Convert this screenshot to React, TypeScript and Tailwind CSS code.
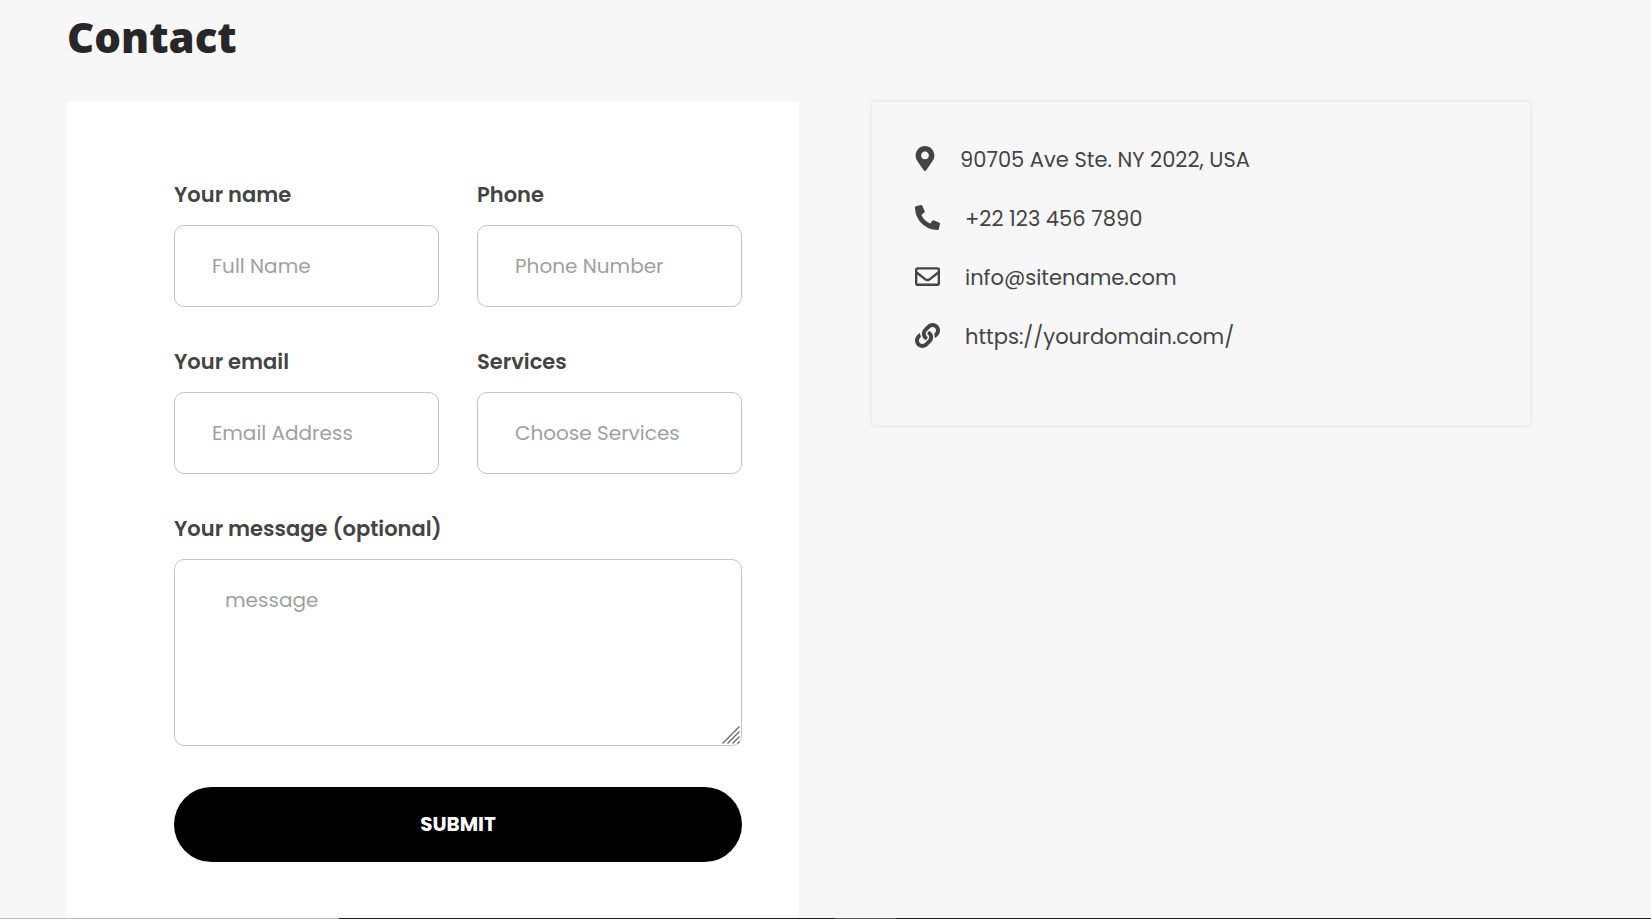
import React from 'react';
import { FaLink, FaMapMarkerAlt, FaPhoneAlt, FaRegEnvelope } from 'react-icons/fa';

const FIELDS = [
  { id: 'name', label: 'Your name', placeholder: 'Full Name', type: 'text' },
  { id: 'phone', label: 'Phone', placeholder: 'Phone Number', type: 'tel' },
  { id: 'email', label: 'Your email', placeholder: 'Email Address', type: 'email' },
  { id: 'services', label: 'Services', placeholder: 'Choose Services', type: 'text' },
];

const labelClass = 'block text-[21px] leading-8 font-semibold text-[#444444]';
const fieldClass =
  'block w-full rounded-[10px] border border-[#c4c4c4] bg-white text-[20px] leading-8 text-[#444444] placeholder:text-[#a0a0a0] outline-none focus:border-black';

function Field({ id, label, placeholder, type }: { id: string; label: string; placeholder: string; type: string }) {
  return (
    <div className="min-w-0">
      <label htmlFor={id} className={labelClass}>{label}</label>
      <input id={id} name={id} type={type} placeholder={placeholder} className={`${fieldClass} mt-[14px] h-[82px] px-[37px]`} />
    </div>
  );
}

function ContactForm() {
  return (
    <form className="bg-white pt-[77px] pr-[57px] pb-[56px] pl-[107px]" onSubmit={(e) => e.preventDefault()}>
      <div className="grid grid-cols-2 gap-x-[38px] gap-y-[39px]">
        {FIELDS.map((f) => (
          <Field key={f.id} {...f} />
        ))}
        <div className="col-span-2">
          <label htmlFor="message" className={labelClass}>Your message (optional)</label>
          <div className="relative mt-[14px]">
            <textarea
              id="message"
              name="message"
              placeholder="message"
              className={`${fieldClass} h-[187px] resize-none px-[50px] py-6`}
            />
            {/* resize grip */}
            <svg
              className="pointer-events-none absolute right-0.5 bottom-0.5"
              width="18"
              height="18"
              viewBox="0 0 18 18"
              stroke="#666666"
              strokeWidth="1.3"
              aria-hidden="true"
            >
              <path d="M0.5 17.5 17.5 0.5M5.5 17.5 17.5 5.5M10.5 17.5 17.5 10.5M15.5 17.5 17.5 15.5" />
            </svg>
          </div>
        </div>
      </div>
      <button type="submit" className="mt-[41px] h-[75px] w-full rounded-full bg-black pb-0.5 text-[20px] leading-8 font-bold text-white">
        SUBMIT
      </button>
    </form>
  );
}

function InfoRow({ icon, children }: { icon: React.ReactNode; children: React.ReactNode }) {
  return (
    <div className="flex items-start gap-[25px]">
      <span className="shrink-0 pt-0.5">{icon}</span>
      {children}
    </div>
  );
}

function ContactInfo() {
  return (
    <address className="flex h-[323px] flex-col gap-[27px] rounded-sm bg-[#f7f7f7] px-[43px] pt-[42px] text-[21px] leading-8 text-[#444444] not-italic shadow-[0_0_6px_rgba(0,0,0,0.1)]">
      <InfoRow icon={<FaMapMarkerAlt className="h-[25px] w-5" />}>
        <span>90705 Ave Ste. NY 2022, USA</span>
      </InfoRow>
      <InfoRow icon={<FaPhoneAlt size={25} />}>
        <a href="tel:+221234567890">+22 123 456 7890</a>
      </InfoRow>
      <InfoRow icon={<FaRegEnvelope size={25} />}>
        <a href="mailto:info@sitename.com">info@sitename.com</a>
      </InfoRow>
      <InfoRow icon={<FaLink size={25} />}>
        <a href="https://yourdomain.com/">https://yourdomain.com/</a>
      </InfoRow>
    </address>
  );
}

export default function App() {
  return (
    <div className="bg-[#f7f7f7] font-['Poppins',Inter,sans-serif]">
      <main className="pr-[121px] pl-[67px]">
        <h1 className="pt-[7px] pb-[35px] font-['Open_Sans',sans-serif] text-[42px] leading-[60px] font-extrabold text-[#272727]">
          Contact
        </h1>
        <div className="grid grid-cols-[732fr_658fr] items-start gap-x-[73px]">
          <ContactForm />
          <ContactInfo />
        </div>
      </main>
      {/* top edge of the section below */}
      <footer className="flex h-px bg-[#1b1b1b]">
        <div className="w-[339px] bg-[#bbbbbb]" />
        <div className="ml-[496px] w-[61px] bg-[#555555]" />
      </footer>
    </div>
  );
}
